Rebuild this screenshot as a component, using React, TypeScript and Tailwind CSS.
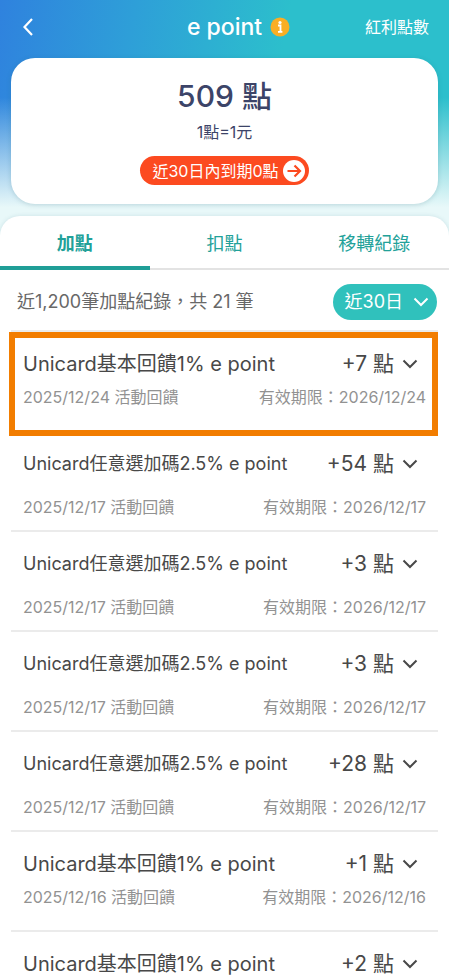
import { useState } from "react";

type PointRecord = {
  id: number;
  title: string;
  amount: string;
  date: string;
  expiry: string;
  compact?: boolean;
};

const records: PointRecord[] = [
  { id: 1, title: "Unicard基本回饋1% e point", amount: "+7", date: "2025/12/24", expiry: "2026/12/24" },
  { id: 2, title: "Unicard任意選加碼2.5% e point", amount: "+54", date: "2025/12/17", expiry: "2026/12/17", compact: true },
  { id: 3, title: "Unicard任意選加碼2.5% e point", amount: "+3", date: "2025/12/17", expiry: "2026/12/17", compact: true },
  { id: 4, title: "Unicard任意選加碼2.5% e point", amount: "+3", date: "2025/12/17", expiry: "2026/12/17", compact: true },
  { id: 5, title: "Unicard任意選加碼2.5% e point", amount: "+28", date: "2025/12/17", expiry: "2026/12/17", compact: true },
  { id: 6, title: "Unicard基本回饋1% e point", amount: "+1", date: "2025/12/16", expiry: "2026/12/16" },
  { id: 7, title: "Unicard基本回饋1% e point", amount: "+2", date: "2025/12/16", expiry: "2026/12/16" },
];

const tabs = ["加點", "扣點", "移轉紀錄"];

const Chevron = ({ className }: { className: string }) => (
  <svg viewBox="0 0 16 16" fill="none" stroke="currentColor" strokeWidth="2" className={className} aria-hidden="true">
    <path d="M1.5 4.5 8 11l6.500-6.500" />
  </svg>
);

const Header = () => (
  <header className="grid grid-cols-[1fr_auto_1fr] items-center h-[54px] px-5 text-white">
    <button type="button" aria-label="返回" className="justify-self-start">
      <svg viewBox="0 0 16 20" fill="none" stroke="currentColor" strokeWidth="2.2" className="w-4 h-5">
        <path d="M12 2 4.500 10l7.500 8" />
      </svg>
    </button>
    <h1 className="relative text-[23px] font-medium leading-8">
      e point
      {/* hangs off the title so the title itself stays centred */}
      <svg viewBox="0 0 20 20" className="absolute left-full inset-y-0 my-auto ml-2 w-5 h-5" aria-hidden="true">
        <circle cx="10" cy="10" r="9.500" fill="#f9ae24" />
        <circle cx="10" cy="5.500" r="1.600" fill="#fff" />
        <path d="M8 8.500h2.500v6M8 14.800h4.400" fill="none" stroke="#fff" strokeWidth="1.800" />
      </svg>
    </h1>
    <a href="#bonus" className="justify-self-end text-base">紅利點數</a>
  </header>
);

const Balance = () => (
  <section className="flex flex-col items-center h-[146px] mx-[11px] mt-1 pt-5 rounded-[24px] bg-white text-[#3c4468] shadow-[0_1px_5px_rgba(40,100,120,0.22)]">
    <p className="text-[30px] leading-9 font-medium">509 點</p>
    <p className="mt-2 text-base leading-5">1點=1元</p>
    <button type="button" className="flex items-center gap-1 h-[29px] mt-[14px] pl-3 pr-1 rounded-full bg-[#fc4a20] text-base text-white whitespace-nowrap">
      近30日內到期0點
      <svg viewBox="0 0 22 22" className="w-[22px] h-[22px]" aria-hidden="true">
        <circle cx="11" cy="11" r="11" fill="#fff" />
        <path d="M4.500 11h12M11.500 5.500 17 11l-5.500 5.500" fill="none" stroke="#fc4a20" strokeWidth="2.200" />
      </svg>
    </button>
  </section>
);

const RecordRow = ({ record, marked }: { record: PointRecord; marked: boolean }) => (
  <li className="relative h-[100px] px-3 pt-5 border-t-2 border-[#ebebeb]">
    {marked && (
      <div className="absolute -left-[2px] right-0 top-0 h-[104px] z-10 border-[6px] border-[#f27d00] pointer-events-none" />
    )}
    <div className="flex items-center justify-between h-6 text-[#484848]">
      <h2 className={record.compact ? "text-lg leading-6" : "text-xl leading-6"}>{record.title}</h2>
      <button type="button" className="flex items-center gap-2 pr-2 text-[21px] leading-6 whitespace-nowrap">
        {record.amount} 點
        <Chevron className="w-4 h-4" />
      </button>
    </div>
    <div className={`flex justify-between text-base leading-6 text-[#929292] ${record.compact ? "mt-[19px]" : "mt-[9px]"}`}>
      <span>{record.date} 活動回饋</span>
      <span>有效期限：{record.expiry}</span>
    </div>
  </li>
);

const App = () => {
  const [active, setActive] = useState(0);

  return (
    <div className="flex flex-col h-dvh overflow-hidden bg-[#e8f8f9] font-['Inter','Noto_Sans_CJK_TC',sans-serif]">
      <div className="shrink-0 pb-3 bg-[linear-gradient(to_bottom,transparent_45%,#e8f8f9_96%),linear-gradient(100deg,#2f82de_0%,#2e9fd8_28%,#2cbfcc_60%,#2cbfcc_100%)]">
        <Header />
        <Balance />
      </div>

      <main className="flex flex-col flex-1 min-h-0 rounded-t-[20px] bg-white shadow-[0_0_4px_rgba(40,100,120,0.15)]">
        <div role="tablist" className="grid grid-cols-3 shrink-0">
          {tabs.map((tab, index) => (
            <button
              key={tab}
              type="button"
              role="tab"
              aria-selected={active === index}
              onClick={() => setActive(index)}
              className={`relative h-[54px] pt-1 border-b-2 border-[#e3e3e3] text-lg text-[#22a199] ${
                active === index ? "font-bold" : "font-normal"
              }`}
            >
              {tab}
              {active === index && <span className="absolute inset-x-0 -bottom-[2px] h-1 bg-[#1f9e97]" />}
            </button>
          ))}
        </div>

        <div className="flex items-center justify-between shrink-0 h-[60px] pt-1 pl-[17px] pr-3">
          <p className="text-lg text-[#686868]">近1,200筆加點紀錄，共 21 筆</p>
          <button type="button" className="flex items-center gap-[10px] h-9 pl-3 pr-2 rounded-full bg-[#30c1bc] text-lg text-white">
            近30日
            <Chevron className="w-4 h-4" />
          </button>
        </div>

        <ul className="flex-1 min-h-0 px-[11px] overflow-y-auto [scrollbar-width:none]">
          {records.map((record) => (
            <RecordRow key={record.id} record={record} marked={record.id === 1} />
          ))}
        </ul>
      </main>
    </div>
  );
};

export default App;
